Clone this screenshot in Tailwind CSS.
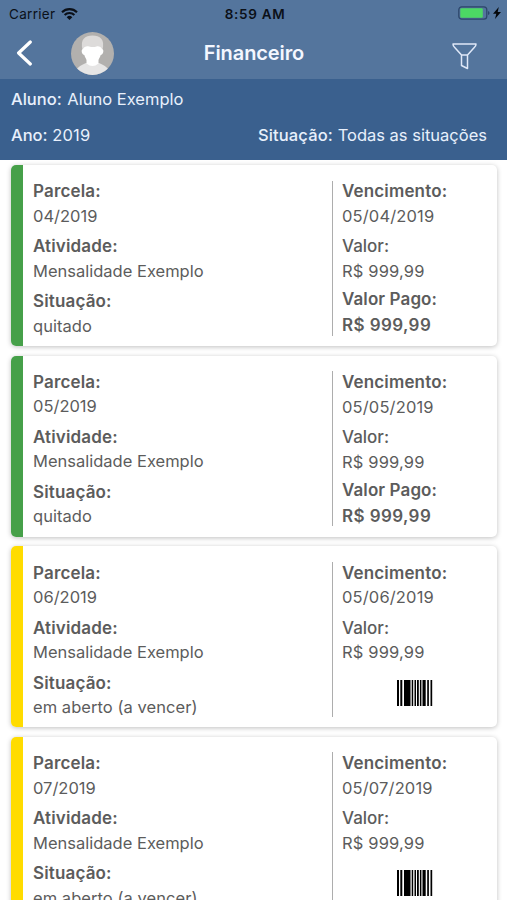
<!DOCTYPE html>
<html lang="pt-BR">
<head>
  <meta charset="UTF-8" />
  <meta name="viewport" content="width=device-width, initial-scale=1" />
  <title>Financeiro</title>
  <script src="https://cdn.jsdelivr.net/npm/@tailwindcss/browser@4"></script>
</head>
<body class="h-[900px] overflow-hidden bg-white font-[Inter,sans-serif] text-base text-[#5c5c5c]">
  <header class="h-[79px] bg-[#54759d]">
    <!-- status bar -->
    <div class="grid h-7 grid-cols-3 items-center pl-[9px] pr-1.5 text-[13.5px] text-[#0b1018]">
      <div class="flex items-center gap-1.5">
        <span class="tracking-[0.3px]">Carrier</span>
        <svg class="h-3 w-[17px]" viewBox="0 0 17 12" fill="none" stroke="currentColor" stroke-width="2.1">
          <path d="M1 4.2a10.7 10.7 0 0 1 15 0M3.6 7a7 7 0 0 1 9.8 0" />
          <path d="M8.5 12 5.7 9.2a4 4 0 0 1 5.6 0z" fill="currentColor" stroke="none" />
        </svg>
      </div>
      <span class="pl-1 text-center font-semibold tracking-[0.7px]"><span class="-ml-1">8:59 AM</span></span>
      <div class="flex items-center justify-end gap-[3px]">
        <svg class="-mt-0.5 h-[14px] w-8" viewBox="0 0 32 14">
          <rect x="0.8" y="0.8" width="28" height="12.4" rx="3" fill="none" stroke="#2c4569" stroke-width="1.2" />
          <rect x="2.3" y="2.2" width="22.5" height="9.6" rx="1.2" fill="#4cd964" />
          <path d="M30 5v4q1.6-.6 1.6-2T30 5z" fill="#2c4569" />
        </svg>
        <svg class="-mt-0.5 h-3 w-2" viewBox="0 0 8 12" fill="#05070a"><path d="M5.8 0 0 6.8h3.3L2 12l6-7H4.7z" /></svg>
      </div>
    </div>

    <div class="grid h-[51px] grid-cols-3 items-center px-[31px]">
      <div class="-ml-[15px] -mt-0.5 flex items-center gap-[38px]">
        <svg class="h-[26px] w-[17px]" viewBox="0 0 17 26" fill="none" stroke="#fff" stroke-width="3.2" stroke-linecap="round" stroke-linejoin="round">
          <path d="M14.3 2 2.6 13l11.7 11" />
        </svg>
        <svg class="mt-0.5 size-[43px]" viewBox="0 0 43 43">
          <defs><clipPath id="avatar"><circle cx="21.5" cy="21.5" r="21.5" /></clipPath></defs>
          <g clip-path="url(#avatar)">
            <path d="M0 0h43v43H0z" fill="#b2b0ae" />
            <path d="M4 43c1-8 5-9 11-12h13c6 3 10 4 11 12z" fill="#e6e5e5" />
            <path d="M15.500 25h12v6.500q-6 5-12 0z" fill="#fff" />
            <path d="M11.500 18C9 7 14 3.500 21.500 3.500S34 7 31.500 18z" fill="#dddbda" />
            <path d="M12 17c1-2 3-3 6-2.500 3 .8 5 .8 7.500 0 2.500-.5 4.500.5 5.500 2.500q2 .5 1 4-1 2-2.300 2c-1.500 5-4.500 7.500-8.200 7.500s-6.700-2.500-8.200-7.500q-1.300 0-2.300-2-1-3.500 1-4z" fill="#fff" />
          </g>
        </svg>
      </div>
      <h1 class="text-center text-[20px] font-semibold -tracking-[0.1px] text-[#f3f7ff]"><span class="-mt-0.5 block pl-px">Financeiro</span></h1>
      <svg class="-mr-px mt-1.5 h-[27px] w-[25px] justify-self-end" viewBox="0 0 25 27" fill="none" stroke="#dfe8f8" stroke-width="1.500" stroke-linejoin="round">
        <path d="M1 1h23q0 2-1.500 3.300L15.500 12h-6L2.500 4.300Q1 3 1 1zM9.500 12v10.500l6 3V12" />
      </svg>
    </div>
  </header>

  <section class="flex h-[81px] flex-col justify-between bg-[#3a608e] py-2 pl-[11px] pr-5 text-[16.5px] text-[#e8f0fc]">
    <p><span class="mr-px font-medium">Aluno:</span> Aluno Exemplo</p>
    <div class="flex justify-between pb-1">
      <p><span class="font-medium">Ano:</span> <span class="tracking-[0.2px]">2019</span></p>
      <p><span class="font-medium tracking-[0.15px]">Situação:</span> Todas as situações</p>
    </div>
  </section>

  <main id="parcelas" class="flex flex-col gap-[9.6px] pl-[11px] pr-[10px] pt-[5px]"></main>

  <script>
    const parcelas = [
      { parcela: "04/2019", vencimento: "05/04/2019", situacao: "quitado", pago: true },
      { parcela: "05/2019", vencimento: "05/05/2019", situacao: "quitado", pago: true },
      { parcela: "06/2019", vencimento: "05/06/2019", situacao: "em aberto (a vencer)", pago: false },
      { parcela: "07/2019", vencimento: "05/07/2019", situacao: "em aberto (a vencer)", pago: false },
    ];

    const barcode = `
      <svg class="ml-[55px] mt-[15px] h-[26px] w-9" viewBox="0 0 36 26" fill="#000">
        <path d="M0 0h2v26H0zM3.300 0h2v26h-2zM7 0h6.500v26H7zM14.700 0h1.500v26h-1.500zM17.500 0h1.500v26h-1.500zM20 0h1.800v26H20zM22.900 0h1.500v26h-1.500zM25.500 0h3.200v26h-3.200zM30.200 0h1.700v26h-1.700zM33.500 0h1.700v26h-1.700z" />
      </svg>`;

    const valorPago = `
      <dt class="mt-1 text-[17px] font-semibold tracking-[0.1px]">Valor Pago:</dt>
      <dd class="mt-[1.500px] text-[17px] font-semibold tracking-[0.4px]">R$ 999,99</dd>`;

    document.getElementById("parcelas").innerHTML = parcelas.map(p => `
      <article class="flex h-[181px] shrink-0 overflow-hidden rounded-[5px] bg-white shadow-[0_1px_5px_rgba(0,0,0,0.25)]">
        <div class="w-3 ${p.pago ? "bg-[#46a049]" : "bg-[#ffdc00]"}"></div>
        <dl class="w-[309px] pl-2.5 pt-[14.4px] text-[16.5px] leading-[24.5px]">
          <dt class="text-[17px] font-semibold tracking-[0.15px]">Parcela:</dt>
          <dd>${p.parcela}</dd>
          <dt class="mt-1.5 text-[17px] font-semibold tracking-[0.15px]">Atividade:</dt>
          <dd>Mensalidade Exemplo</dd>
          <dt class="mt-1.5 text-[17px] font-semibold tracking-[0.15px]">Situação:</dt>
          <dd class="tracking-[0.05px]">${p.situacao}</dd>
        </dl>
        <dl class="my-[15.500px] h-[155px] border-l border-[#adadad] pl-[9px] text-[16.5px] leading-[24.5px]">
          <dt class="-mt-[1.100px] text-[17px] font-semibold tracking-[0.15px]">Vencimento:</dt>
          <dd class="tracking-[0.15px]">${p.vencimento}</dd>
          <dt class="mt-1.5 text-[17px] font-medium">Valor:</dt>
          <dd class="tracking-[0.15px]">R$ 999,99</dd>
          ${p.pago ? valorPago : barcode}
        </dl>
      </article>
    `).join("");
  </script>
</body>
</html>
